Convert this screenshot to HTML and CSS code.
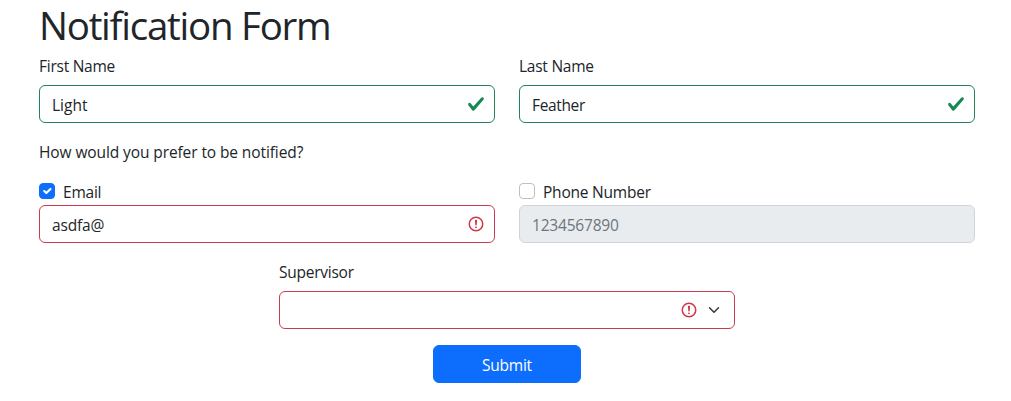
FILE: index.html
```html
<!DOCTYPE html>
<html lang="en">
<head>
<meta charset="utf-8">
<title>Notification Form</title>
<link rel="stylesheet" href="styles.css">
</head>
<body>
<form class="form" novalidate>
  <h1 class="title">Notification Form</h1>
  <div class="row">
    <div class="group">
      <label class="label" for="first">First Name</label>
      <div class="field">
        <input class="control valid light" id="first" type="text" value="Light">
        <svg class="state" viewBox="0 0 8 8"><path fill="#198754" d="M2.3 6.73.6 4.53c-.4-1.04.46-1.4 1.1-.8l1.1 1.4 3.4-3.8c.6-.63 1.6-.27 1.2.7l-4 4.6c-.43.5-.8.4-1.1.1z"/></svg>
      </div>
    </div>
    <div class="group">
      <label class="label" for="last">Last Name</label>
      <div class="field">
        <input class="control valid" id="last" type="text" value="Feather">
        <svg class="state" viewBox="0 0 8 8"><path fill="#198754" d="M2.3 6.73.6 4.53c-.4-1.04.46-1.4 1.1-.8l1.1 1.4 3.4-3.8c.6-.63 1.6-.27 1.2.7l-4 4.6c-.43.5-.8.4-1.1.1z"/></svg>
      </div>
    </div>
  </div>
  <p class="question">How would you prefer to be notified?</p>
  <div class="row">
    <div class="group">
      <label class="check"><span class="box checked"><svg viewBox="0 0 20 20"><path fill="none" stroke="#fff" stroke-linecap="round" stroke-linejoin="round" stroke-width="3" d="m6 10 3 3 6-6"/></svg></span><span class="check-text">Email</span></label>
      <div class="field">
        <input class="control invalid address" type="text" value="asdfa@">
        <svg class="state" viewBox="0 0 12 12" fill="none" stroke="#d13547"><circle cx="6" cy="6" r="4.5"/><path stroke-linejoin="round" d="M5.8 3.6h.4L6 6.5z"/><circle cx="6" cy="8.2" r=".6" fill="#d13547" stroke="none"/></svg>
      </div>
    </div>
    <div class="group">
      <label class="check"><span class="box"></span><span class="check-text">Phone Number</span></label>
      <div class="field">
        <input class="control disabled" type="text" placeholder="1234567890" disabled>
      </div>
    </div>
  </div>
  <div class="group supervisor">
    <label class="label" for="supervisor">Supervisor</label>
    <div class="field">
      <select class="control invalid" id="supervisor"><option value=""></option></select>
      <svg class="state state-select" viewBox="0 0 12 12" fill="none" stroke="#d13547"><circle cx="6" cy="6" r="4.5"/><path stroke-linejoin="round" d="M5.8 3.6h.4L6 6.5z"/><circle cx="6" cy="8.2" r=".6" fill="#d13547" stroke="none"/></svg>
      <svg class="chevron" viewBox="0 0 16 16"><path fill="none" stroke="#343a40" stroke-linecap="round" stroke-linejoin="round" stroke-width="2" d="m2 5 6 6 6-6"/></svg>
    </div>
  </div>
  <button class="submit" type="button">Submit</button>
</form>
</body>
</html>
```
FILE: styles.css
```css
* { box-sizing: border-box; }
body {
  margin: 0;
  background: #fff;
  color: #212529;
  font: 400 15.5px/24px "Open Sans", "Noto Sans", sans-serif;
}
.form {
  display: flex;
  flex-direction: column;
  width: 936px;
  margin-left: 39px;
}
.title {
  align-self: flex-start;
  margin: 0;
  padding-bottom: 3px;
  font-size: 38.5px;
  font-weight: 400;
  line-height: 50px;
  letter-spacing: -1.25px;
}
.row { display: grid; grid-template-columns: 1fr 1fr; gap: 24px; }
.group { display: flex; flex-direction: column; align-items: flex-start; }
.label { margin-bottom: 6px; line-height: 26px; letter-spacing: -0.25px; }
.field { position: relative; width: 100%; height: 38px; }
.control {
  display: block;
  width: 100%;
  height: 38px;
  margin: 0;
  padding: 7px 36px 5px 12px;
  border: 1px solid #ced4da;
  border-radius: 6px;
  outline: 0;
  appearance: none;
  background: #fff;
  color: #212529;
  font: inherit;
  letter-spacing: -0.35px;
}
.light { letter-spacing: 0; }
.address { letter-spacing: -0.15px; }
.valid { border-color: #26805a; }
.invalid { border-color: #c93c50; }
.disabled { background: #e9ecef; letter-spacing: -0.2px; }
.disabled::placeholder { color: #6c757d; opacity: 1; }
.state { position: absolute; top: 10px; right: 10px; width: 18px; height: 18px; }
.state-select { right: 37px; }
.chevron { position: absolute; top: 13px; right: 13px; width: 16px; height: 12px; }
.question { align-self: flex-start; margin: 16px 0 14px; line-height: 26px; letter-spacing: -0.1px; }
.check { display: flex; gap: 8px; height: 24px; margin-bottom: 2px; letter-spacing: -0.22px; }
.check-text { line-height: 26px; }
.box {
  width: 16px;
  height: 16px;
  margin-top: 4px;
  border: 1px solid #bfbfbf;
  border-radius: 4px;
}
.checked { display: flex; border-color: #0d6efd; background: #0d6efd; }
.supervisor { align-self: center; width: 456px; margin-top: 16px; }
.submit {
  align-self: center;
  width: 148px;
  height: 38px;
  margin-top: 16px;
  padding: 7px 12px 5px;
  border: 1px solid #0d6efd;
  border-radius: 6px;
  background: #0d6efd;
  color: #fff;
  font: inherit;
  letter-spacing: -0.25px;
}
```
